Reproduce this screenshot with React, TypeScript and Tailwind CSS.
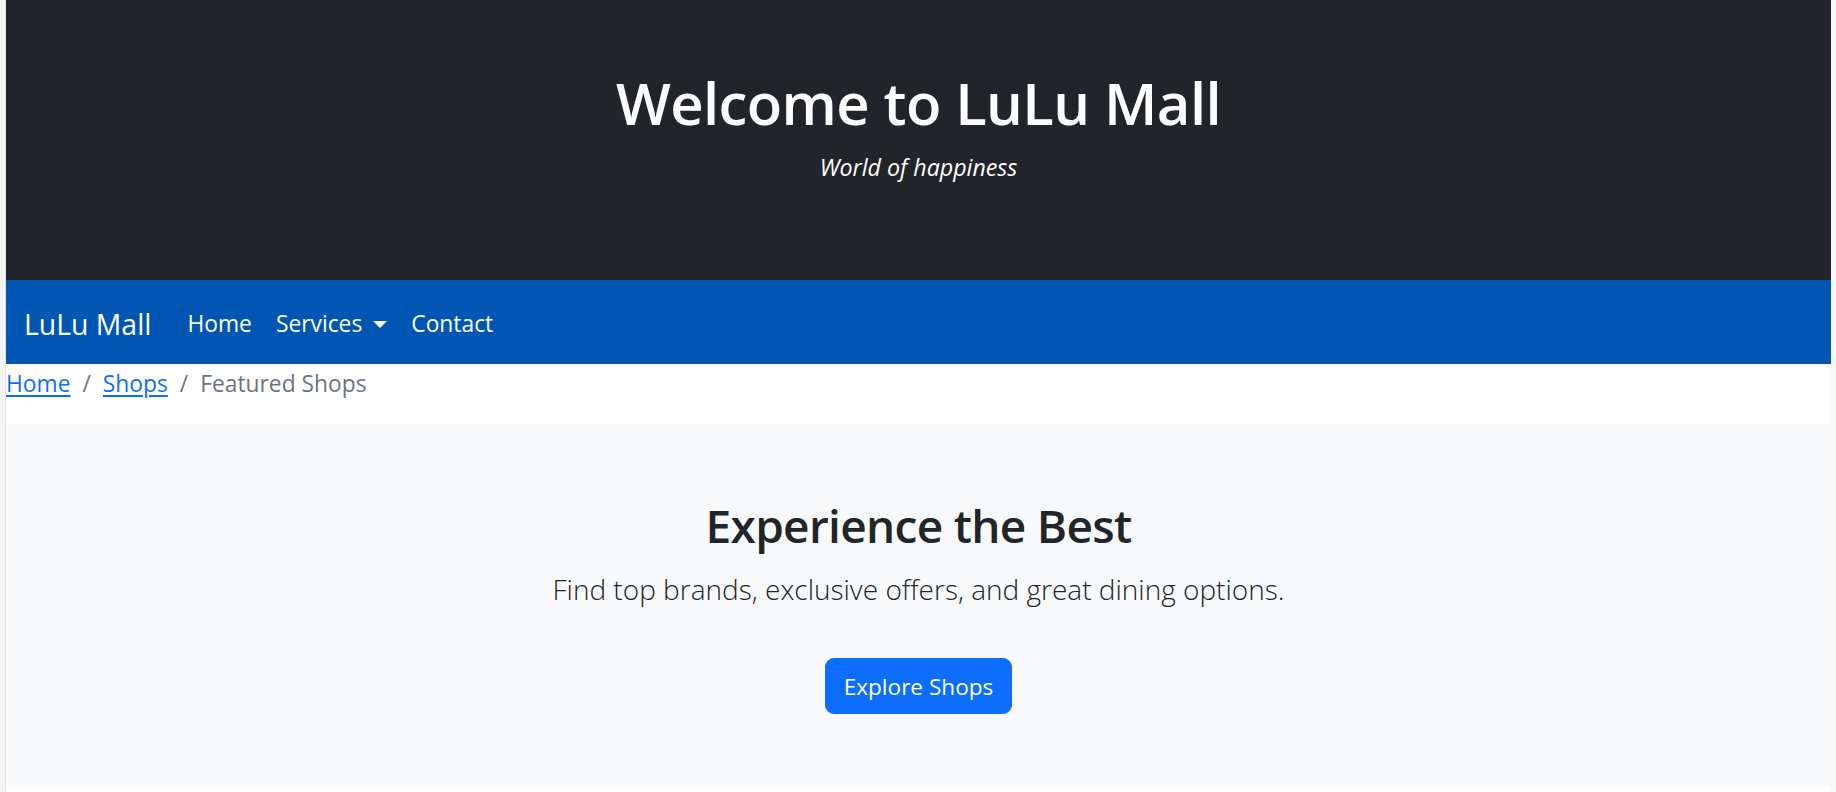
import React from "react";

export default function App() {
  const font = { fontFamily: '"Segoe UI", "Open Sans", "Noto Sans", sans-serif' };
  return (
    <div className="flex h-[792px] w-full bg-white overflow-hidden" style={font}>
      <div className="w-[6px] shrink-0 bg-[#f4f4f4] border-r border-[#e4e4e4]" />
      <div className="flex-1 flex flex-col min-w-0">
        <header className="h-[280px] shrink-0 bg-[#212529] text-white flex flex-col items-center pt-[67px]">
          <h1 className="text-[58px] leading-[72px] font-semibold tracking-[-0.6px] mb-[10px]">Welcome to LuLu Mall</h1>
          <p className="italic text-[23.2px] leading-[36px]">World of happiness</p>
        </header>
        <nav className="h-[84px] shrink-0 bg-[#0056b3] flex items-center px-[18px] pt-[4px] text-white">
          <span className="text-[28.4px] leading-[45px] mr-[24px]">LuLu Mall</span>
          <a className="text-[22.8px] leading-[36px] px-[12px]">Home</a>
          <a className="text-[22.8px] leading-[36px] px-[12px] flex items-center">
            Services
            <span className="ml-[11px] inline-block w-0 h-0 border-l-[7px] border-r-[7px] border-t-[7px] border-l-transparent border-r-transparent border-t-white" />
          </a>
          <a className="text-[22.8px] leading-[36px] px-[12px]">Contact</a>
        </nav>
        <ol className="h-[60px] shrink-0 flex items-start pt-[2px] text-[22.8px] leading-[36px]">
          <li><a className="text-[#0d6efd] underline underline-offset-[3px]">Home</a></li>
          <li className="flex text-[#6c757d]"><span className="px-[12px]">/</span><a className="text-[#0d6efd] underline underline-offset-[3px]">Shops</a></li>
          <li className="flex text-[#6c757d]"><span className="px-[12px]">/</span><span>Featured Shops</span></li>
        </ol>
        <section className="h-[362px] shrink-0 bg-[#f8f9fa] flex flex-col items-center pt-[73px] text-[#212529]">
          <h2 className="text-[46px] leading-[57.6px] font-semibold tracking-[-0.7px] mb-[12px]">Experience the Best</h2>
          <p className="text-[28px] leading-[45px] font-light mb-[46px]">Find top brands, exclusive offers, and great dining options.</p>
          <button className="h-[56px] px-[18px] pt-[3px] rounded-[9px] bg-[#0d6efd] border border-[#0d6efd] text-white text-[22.6px] leading-[36px]">Explore Shops</button>
        </section>
        <div className="flex-1 bg-white" />
      </div>
      <div className="w-[5px] shrink-0 bg-[#f8f8f8]" />
    </div>
  );
}
